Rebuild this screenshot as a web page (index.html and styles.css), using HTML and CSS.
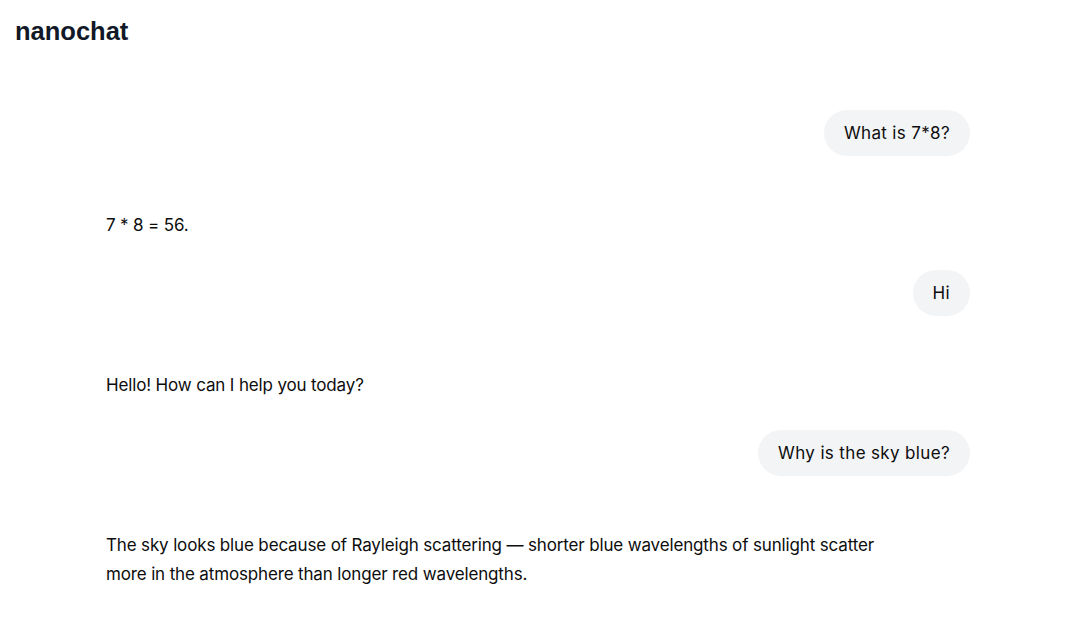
FILE: index.html
```html
<!DOCTYPE html>
<html lang="en">
<head>
    <meta charset="UTF-8">
    <meta name="viewport" content="width=device-width, initial-scale=1.0">
    <title>nanochat</title>
    <link rel="stylesheet" href="styles.css">
</head>
<body>

    <header class="header">
        <h1 class="logo">nanochat</h1>
    </header>

    <main class="chat">
        <div class="messages">
            <div class="message user">
                <div class="bubble">What is 7*8?</div>
            </div>
            <div class="message assistant">
                <p>7 * 8 = 56.</p>
            </div>
            <div class="message user">
                <div class="bubble">Hi</div>
            </div>
            <div class="message assistant">
                <p>Hello! How can I help you today?</p>
            </div>
            <div class="message user">
                <div class="bubble">Why is the sky blue?</div>
            </div>
            <div class="message assistant">
                <p>The sky looks blue because of Rayleigh scattering — shorter blue wavelengths of sunlight scatter more in the atmosphere than longer red wavelengths.</p>
            </div>
        </div>
    </main>

</body>
</html>
```

FILE: styles.css
```css
/* Base */
body {
    font-family: Inter, "Noto Sans", sans-serif;
    background-color: #fff;
    color: #0d0d0d;
    margin: 0;
    padding: 0 4px 0 0;
}

.header {
    padding: 15px 15px;
}
.logo {
    margin: 0;
    font-family: "Liberation Sans", Arial, sans-serif;
    font-size: 25.5px;
    font-weight: bold;
    line-height: 32px;
    color: #111827;
}

.chat {
    max-width: 864px;
    margin: 0 auto;
    padding: 48px 0 40px;
}
.messages {
    display: flex;
    flex-direction: column;
    gap: 24px;
}

.message {
    font-size: 17px;
    line-height: 29px;
}
.message.user {
    display: flex;
    justify-content: flex-end;
}
.bubble {
    background-color: #f3f4f6;
    padding: 8.5px 20px;
    border-radius: 23px;
    letter-spacing: 0.35px;
}
.message.assistant {
    padding: 31px 0 6px;
    letter-spacing: -0.15px;
}
.message.assistant p {
    margin: 0;
    max-width: 800px;
}
```
